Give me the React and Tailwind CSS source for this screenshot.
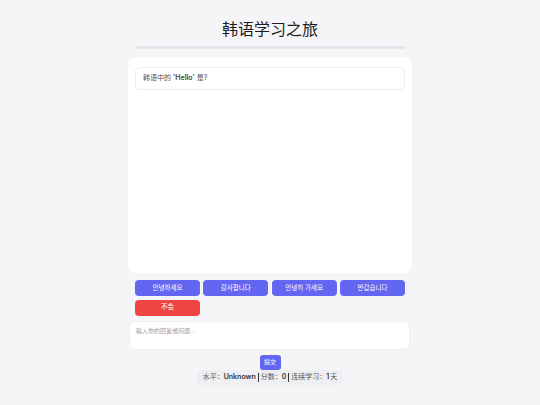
const font = { fontFamily: 'Inter, "Noto Sans CJK SC", sans-serif' };

const answers = ['안녕하세요', '감사합니다', '안녕히 가세요', '반갑습니다'];

export default function App() {
    return (
        <div className="w-[540px] h-[405px] bg-[#f5f5f7] overflow-hidden" style={font}>
            <div className="w-[284px] mx-auto pt-[18px]">
                <h1 className="text-center text-[16px] leading-[22px] font-normal text-[#1d1d1f]">韩语学习之旅</h1>
                <div className="w-[270px] h-[3px] mx-auto mt-[6px] rounded-full bg-[#e5e5ea]" />

                <div className="mt-[8px] h-[216px] rounded-[8px] bg-white px-[7px] pt-[10px]">
                    <div className="h-[23px] rounded-[5px] border border-[#ececef] flex items-center px-[7px] text-[7px] text-[#555]">
                        韩语中的 <b className="mx-[2px] font-semibold text-[#444]">'Hello'</b> 是?
                    </div>
                </div>

                <div className="px-[7px] mt-[7px] grid grid-cols-4 gap-x-[3.5px] gap-y-[3.5px]">
                    {answers.map((a) => (
                        <button key={a} className="h-[16px] rounded-[4px] bg-[#6366f1] text-white text-[6.5px] leading-none">{a}</button>
                    ))}
                    <button className="h-[16px] rounded-[4px] bg-[#ef4444] text-white text-[6.5px] leading-none">不会</button>
                </div>

                <div className="mt-[5px] mx-[1px] w-[281px] h-[29px] rounded-[6px] bg-white border border-[#efeff2] px-[6px] pt-[4px] text-[6px] text-[#9a9aa0]">
                    输入你的回答或问题...
                </div>

                <div className="flex justify-center mt-[5px]">
                    <button className="w-[21px] h-[15px] rounded-[3px] bg-[#6366f1] text-white text-[6px] leading-none">提交</button>
                </div>

                <div className="flex justify-center">
                    <div className="h-[15px] px-[6px] rounded-[4px] bg-[#eeeff2] flex items-center text-[7px] text-[#555]">
                        水平：<b className="font-semibold text-[#333]">Unknown</b>
                        <span className="mx-[2px] w-[1px] h-[9px] bg-[#333]" />
                        分数：<b className="font-semibold text-[#333]">0</b>
                        <span className="mx-[2px] w-[1px] h-[9px] bg-[#333]" />
                        连续学习：<b className="font-semibold text-[#333] mr-[1px]">1</b>天
                    </div>
                </div>
            </div>
        </div>
    );
}
